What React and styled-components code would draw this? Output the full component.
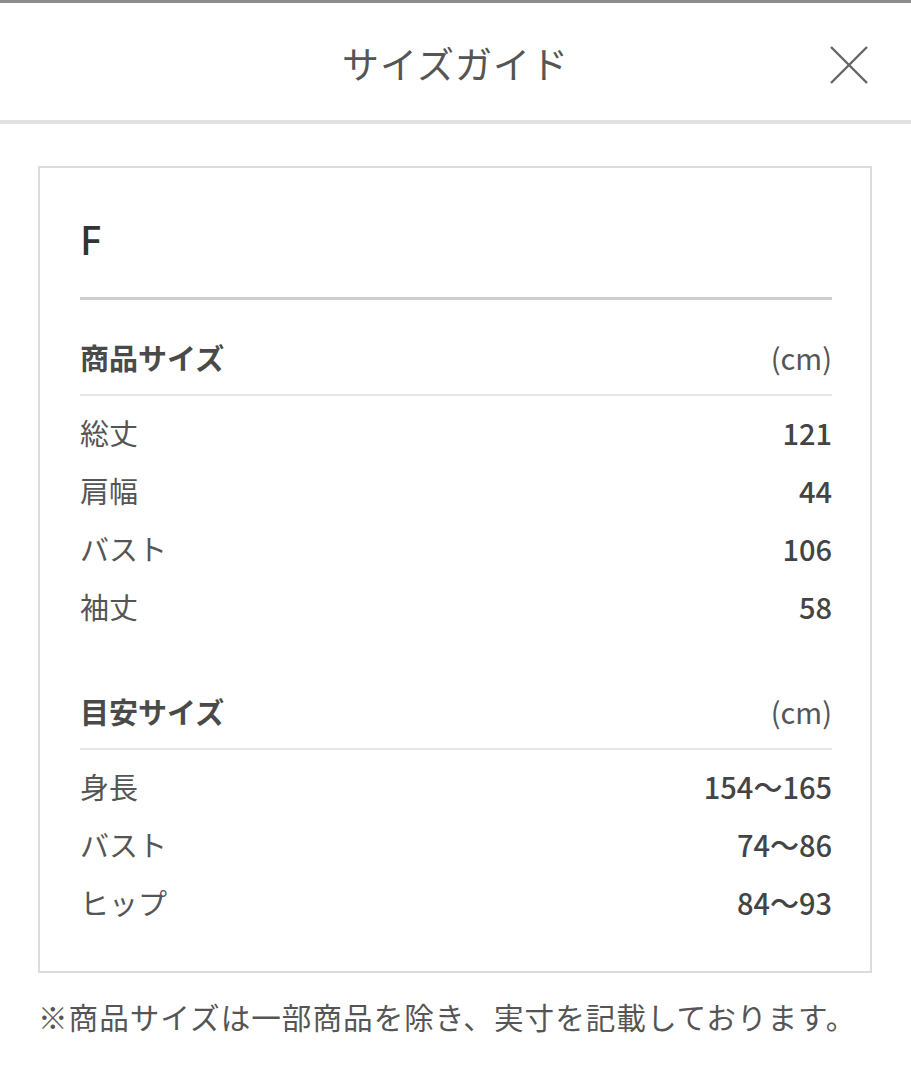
import React from "react";
import styled, { createGlobalStyle } from "styled-components";

const Global = createGlobalStyle`
  html, body { margin: 0; padding: 0; background: #fff; }
  body {
    font-family: "Noto Sans CJK JP", "Noto Sans", sans-serif;
    color: #444;
    -webkit-font-smoothing: antialiased;
  }
`;

const Page = styled.div`
  width: 911px;
  min-height: 1080px;
  border-top: 3px solid #8c8c8c;
  box-sizing: border-box;
  background: #fff;
`;

const Header = styled.header`
  position: relative;
  height: 117px;
  display: flex;
  align-items: center;
  justify-content: center;
  border-bottom: 4px solid #e2e2e2;
`;

const Title = styled.h1`
  margin: 0;
  font-size: 37px;
  font-weight: 400;
  letter-spacing: 1px;
  color: #555;
  line-height: 1;
  transform: translateY(2px);
`;

const CloseButton = styled.button`
  position: absolute;
  right: 42px;
  top: 42px;
  width: 40px;
  height: 40px;
  padding: 0;
  border: none;
  background: none;
  cursor: pointer;
  display: flex;
  align-items: center;
  justify-content: center;
`;

const Content = styled.main`
  padding: 42px 39px 0 38px;
`;

const Card = styled.section`
  border: 2px solid #dcdcdc;
  padding: 0 38px 40px 40px;
`;

const SizeName = styled.div`
  font-family: "Noto Sans", "Noto Sans CJK JP", sans-serif;
  font-size: 40px;
  font-weight: 500;
  color: #333;
  height: 132px;
  display: flex;
  align-items: center;
  padding-top: 14px;
  box-sizing: border-box;
  border-bottom: 3px solid #cdcdcd;
`;

const Section = styled.div`
  margin-top: ${(p) => p.$top}px;
`;

const SectionHead = styled.div`
  display: flex;
  justify-content: space-between;
  align-items: center;
  height: ${(p) => p.$height}px;
  padding-top: 20px;
  box-sizing: border-box;
  border-bottom: 2px solid #e6e6e6;
  font-size: 29px;
  line-height: 1;
`;

const HeadLabel = styled.span`
  font-weight: 700;
  color: #4a4a4a;
`;

const Unit = styled.span`
  font-weight: 400;
  color: #555;
`;

const Rows = styled.div`
  padding-top: 7px;
`;

const Row = styled.div`
  display: flex;
  justify-content: space-between;
  align-items: center;
  height: 58px;
  font-size: 29px;
  line-height: 1;
`;

const Label = styled.span`
  color: #555;
  font-weight: 400;
`;

const Value = styled.span`
  color: #444;
  font-weight: 500;
`;

const Note = styled.p`
  margin: 23px 0 0 0;
  font-size: 29.6px;
  letter-spacing: 1px;
  color: #555;
  line-height: 1.4;
  white-space: nowrap;
`;

const sections = [
  {
    title: "商品サイズ",
    top: 0,
    height: 96,
    rows: [
      ["総丈", "121"],
      ["肩幅", "44"],
      ["バスト", "106"],
      ["袖丈", "58"],
    ],
  },
  {
    title: "目安サイズ",
    top: 20,
    height: 95,
    rows: [
      ["身長", "154〜165"],
      ["バスト", "74〜86"],
      ["ヒップ", "84〜93"],
    ],
  },
];

export default function App() {
  return (
    <>
      <Global />
      <Page>
        <Header>
          <Title>サイズガイド</Title>
          <CloseButton aria-label="close">
            <svg width="40" height="40" viewBox="0 0 40 40">
              <path d="M2 2 L38 38 M38 2 L2 38" stroke="#666" strokeWidth="2.4" fill="none" />
            </svg>
          </CloseButton>
        </Header>
        <Content>
          <Card>
            <SizeName>F</SizeName>
            {sections.map((s) => (
              <Section key={s.title} $top={s.top}>
                <SectionHead $height={s.height}>
                  <HeadLabel>{s.title}</HeadLabel>
                  <Unit>(cm)</Unit>
                </SectionHead>
                <Rows>
                  {s.rows.map(([k, v], i) => (
                    <Row key={i}>
                      <Label>{k}</Label>
                      <Value>{v}</Value>
                    </Row>
                  ))}
                </Rows>
              </Section>
            ))}
          </Card>
          <Note>※商品サイズは一部商品を除き、実寸を記載しております。</Note>
        </Content>
      </Page>
    </>
  );
}
